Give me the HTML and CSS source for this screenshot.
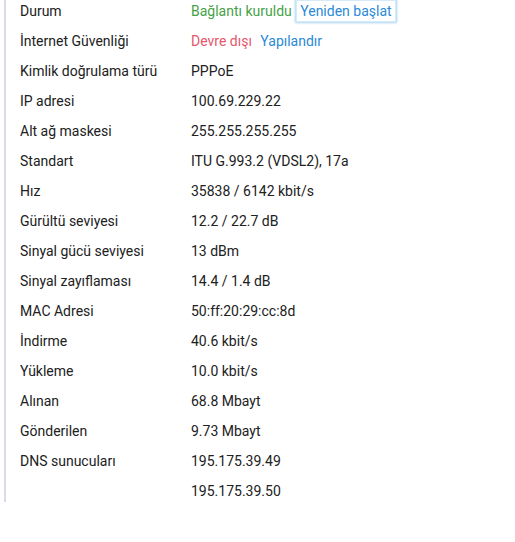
FILE: index.html
```html
<!DOCTYPE html>
<html lang="tr">
<head>
    <meta charset="UTF-8">
    <title>Bağlantı durumu</title>
    <link rel="stylesheet" href="styles.css">
</head>
<body>
    <div class="info-panel">
        <div class="info-row">
            <span class="info-label">Durum</span>
            <span class="info-value"><span class="ok">Bağlantı kuruldu</span> <button class="link-button focused">Yeniden başlat</button></span>
        </div>
        <div class="info-row">
            <span class="info-label">İnternet Güvenliği</span>
            <span class="info-value"><span class="off">Devre dışı</span> <button class="link-button">Yapılandır</button></span>
        </div>
        <div class="info-row">
            <span class="info-label">Kimlik doğrulama türü</span>
            <span class="info-value">PPPoE</span>
        </div>
        <div class="info-row">
            <span class="info-label">IP adresi</span>
            <span class="info-value">100.69.229.22</span>
        </div>
        <div class="info-row">
            <span class="info-label">Alt ağ maskesi</span>
            <span class="info-value">255.255.255.255</span>
        </div>
        <div class="info-row">
            <span class="info-label">Standart</span>
            <span class="info-value">ITU G.993.2 (VDSL2), 17a</span>
        </div>
        <div class="info-row">
            <span class="info-label">Hız</span>
            <span class="info-value">35838 / 6142 kbit/s</span>
        </div>
        <div class="info-row">
            <span class="info-label">Gürültü seviyesi</span>
            <span class="info-value">12.2 / 22.7 dB</span>
        </div>
        <div class="info-row">
            <span class="info-label">Sinyal gücü seviyesi</span>
            <span class="info-value">13 dBm</span>
        </div>
        <div class="info-row">
            <span class="info-label">Sinyal zayıflaması</span>
            <span class="info-value">14.4 / 1.4 dB</span>
        </div>
        <div class="info-row">
            <span class="info-label">MAC Adresi</span>
            <span class="info-value">50:ff:20:29:cc:8d</span>
        </div>
        <div class="info-row">
            <span class="info-label">İndirme</span>
            <span class="info-value">40.6 kbit/s</span>
        </div>
        <div class="info-row">
            <span class="info-label">Yükleme</span>
            <span class="info-value">10.0 kbit/s</span>
        </div>
        <div class="info-row">
            <span class="info-label">Alınan</span>
            <span class="info-value">68.8 Mbayt</span>
        </div>
        <div class="info-row">
            <span class="info-label">Gönderilen</span>
            <span class="info-value">9.73 Mbayt</span>
        </div>
        <div class="info-row">
            <span class="info-label">DNS sunucuları</span>
            <span class="info-value">195.175.39.49</span>
        </div>
        <div class="info-row">
            <span class="info-label"></span>
            <span class="info-value">195.175.39.50</span>
        </div>
    </div>
</body>
</html>
```

FILE: styles.css
```css
body {
    margin: 0;
    font-family: Roboto, "Liberation Sans", sans-serif;
    font-size: 14px;
    color: #212121;
    background-color: #fff;
}
.info-panel {
    margin-left: 4px;
    padding: 1px 0 1px 14px;
    border-left: 2px solid #d9dce6;
    display: flex;
    flex-direction: column;
    gap: 10px;
}
.info-row {
    display: flex;
    height: 20px;
    line-height: 20px;
}
.info-label {
    width: 171px;
    flex-shrink: 0;
}
.ok {
    color: #45a247;
}
.off {
    color: #e8566c;
}
.link-button {
    font: inherit;
    color: #2a8ad6;
    background: none;
    border: 1px solid transparent;
    padding: 0 3px;
    margin-left: 1px;
    height: 22px;
    line-height: 20px;
    vertical-align: top;
    margin-top: -1px;
    cursor: pointer;
}
.link-button.focused {
    border-color: #d6ebfa;
    box-shadow: 0 0 2px 1px #a9d4f2;
}
```
